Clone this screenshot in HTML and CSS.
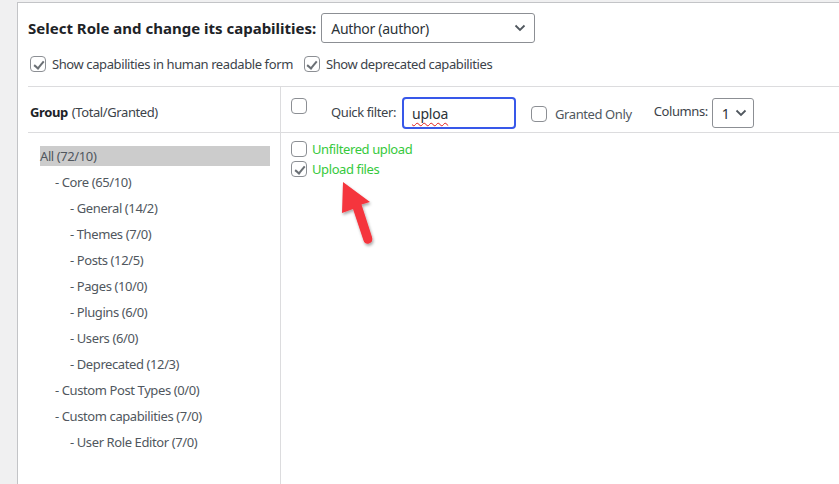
FILE: index.html
```html
<!DOCTYPE html>
<html lang="en">
<head>
<meta charset="utf-8">
<title>User Role Editor</title>
<link rel="stylesheet" href="styles.css">
</head>
<body>
<div class="panel">
  <div class="role-row">
    <span class="role-title">Select Role and change its capabilities:</span>
    <div class="select role-select">
      <span>Author (author)</span>
      <svg class="chev" width="12" height="8" viewBox="0 0 12 8"><path d="M1.5 1.5 6 6l4.5-4.5" fill="none" stroke="#50575e" stroke-width="1.8"/></svg>
    </div>
  </div>
  <div class="opts-row">
    <label class="opt"><input type="checkbox" class="cb" checked> Show capabilities in human readable form</label>
    <label class="opt"><input type="checkbox" class="cb" checked> Show deprecated capabilities</label>
  </div>

  <div class="editor">
    <div class="groups">
      <div class="groups-head"><b>Group</b> (Total/Granted)</div>
      <ul class="group-list">
        <li class="sel">All (72/10)</li>
        <li class="l1">- Core (65/10)</li>
        <li class="l2">- General (14/2)</li>
        <li class="l2">- Themes (7/0)</li>
        <li class="l2">- Posts (12/5)</li>
        <li class="l2">- Pages (10/0)</li>
        <li class="l2">- Plugins (6/0)</li>
        <li class="l2">- Users (6/0)</li>
        <li class="l2">- Deprecated (12/3)</li>
        <li class="l1">- Custom Post Types (0/0)</li>
        <li class="l1">- Custom capabilities (7/0)</li>
        <li class="l2">- User Role Editor (7/0)</li>
      </ul>
    </div>
    <div class="caps">
      <div class="caps-head">
        <input type="checkbox" class="cb all-cb">
        <span class="qf-label">Quick filter:</span>
        <div class="qf-input"><span class="typo">uploa</span></div>
        <label class="granted"><input type="checkbox" class="cb"> Granted Only</label>
        <span class="cols-label">Columns:</span>
        <div class="select cols-select">
          <span>1</span>
          <svg class="chev" width="12" height="8" viewBox="0 0 12 8"><path d="M1.5 1.5 6 6l4.5-4.5" fill="none" stroke="#50575e" stroke-width="1.8"/></svg>
        </div>
      </div>
      <div class="cap-list">
        <label class="cap"><input type="checkbox" class="cb"> Unfiltered upload</label>
        <label class="cap"><input type="checkbox" class="cb" checked> Upload files</label>
        <svg class="pointer" width="52" height="80" viewBox="0 0 52 80">
          <defs>
            <filter id="sh" x="-30%" y="-30%" width="160%" height="160%">
              <feDropShadow dx="1" dy="2" stdDeviation="1.6" flood-color="#000" flood-opacity="0.35"/>
            </filter>
          </defs>
          <path d="M13 8 L40 28 L31.5 30.5 L42 63 Q43.5 68 39 69.5 Q35 70.5 33.5 66.5 L23 35 L12 39 Z" fill="#f5353d" filter="url(#sh)"/>
        </svg>
      </div>
    </div>
  </div>
</div>
</body>
</html>
```

FILE: styles.css
```css
html, body {
  margin: 0;
  padding: 0;
  background: #f0f0f1;
  font-family: "Noto Sans", "Open Sans", sans-serif;
  font-size: 13px;
  letter-spacing: -0.4px;
  color: #3c434a;
}

.panel {
  margin: 2px 0 0 17px;
  background: #fff;
  border-top: 1px solid #c3c4c7;
  border-left: 1px solid #c3c4c7;
  padding: 10px 0 0 10px;
  min-height: 490px;
  box-sizing: border-box;
}

.role-row {
  display: flex;
  align-items: center;
  gap: 5px;
}

.role-title {
  font-weight: 700;
  font-size: 15px;
  color: #1d2327;
  letter-spacing: 0;
}

.select {
  display: flex;
  align-items: center;
  justify-content: space-between;
  border: 1px solid #8c8f94;
  border-radius: 3px;
  box-sizing: border-box;
  background: #fff;
  color: #2c3338;
  font-size: 14px;
  letter-spacing: -0.3px;
}

.role-select {
  width: 214px;
  height: 30px;
  padding: 0 8px 0 9px;
}

.opts-row {
  display: flex;
  align-items: center;
  gap: 11px;
  margin-top: 11px;
  padding-left: 2px;
  height: 20px;
}

.opt {
  display: flex;
  align-items: center;
  gap: 6px;
}

.cb {
  appearance: none;
  -webkit-appearance: none;
  margin: 0;
  width: 16px;
  height: 16px;
  border: 1px solid #8c8f94;
  border-radius: 4px;
  background: #fff;
  box-sizing: border-box;
  position: relative;
  flex: none;
}

.cb:checked::before {
  content: "";
  position: absolute;
  left: 4.5px;
  top: 1.5px;
  width: 4px;
  height: 8px;
  border-right: 2px solid #6b7075;
  border-bottom: 2px solid #6b7075;
  transform: rotate(40deg);
}

.editor {
  display: flex;
  margin-top: 12px;
  border-top: 1px solid #dcdcde;
}

.groups {
  width: 252px;
  flex: none;
  border-right: 1px solid #dcdcde;
}

.groups-head {
  height: 46px;
  display: flex;
  align-items: center;
  padding: 5px 0 0 2px;
  box-sizing: border-box;
  border-bottom: 1px solid #dcdcde;
  color: #3c434a;
}

.groups-head b {
  color: #1d2327;
  margin-right: 4px;
}

.group-list {
  list-style: none;
  margin: 0;
  padding: 13px 10px 40px 12px;
}

.group-list li {
  height: 20px;
  line-height: 20px;
  margin-bottom: 6px;
  color: #50575e;
}

.group-list li.sel {
  background: #cccccc;
  color: #50575e;
}

.group-list li.l1 { padding-left: 15px; }
.group-list li.l2 { padding-left: 30px; }

.caps {
  flex: 1;
  min-width: 0;
}

.caps-head {
  height: 46px;
  display: flex;
  align-items: flex-start;
  box-sizing: border-box;
  border-bottom: 1px solid #dcdcde;
  padding: 10px 0 0 10px;
}

.all-cb {
  margin-top: 1px;
}

.qf-label {
  margin: 6px 0 0 24px;
  color: #3c434a;
}

.qf-input {
  margin-left: 6px;
  width: 114px;
  height: 32px;
  border: 2px solid #3858e9;
  border-radius: 4px;
  box-sizing: border-box;
  padding: 5px 0 0 8px;
  font-size: 14px;
  letter-spacing: -0.2px;
  color: #2c3338;
}

.typo {
  text-decoration: underline wavy #e02020;
  text-decoration-thickness: 1px;
  text-underline-offset: 3px;
}

.granted {
  display: flex;
  align-items: center;
  gap: 8px;
  margin: 8px 0 0 15px;
  color: #50575e;
}

.cols-label {
  margin: 5px 0 0 22px;
  color: #3c434a;
}

.cols-select {
  margin: 1px 0 0 4px;
  width: 42px;
  height: 30px;
  padding: 0 6px 0 9px;
}

.cap-list {
  position: relative;
  padding: 6px 0 0 10px;
}

.cap {
  display: flex;
  align-items: center;
  gap: 5px;
  height: 20px;
  color: #36c93c;
}

.pointer {
  position: absolute;
  left: 49px;
  top: 41px;
}
```
